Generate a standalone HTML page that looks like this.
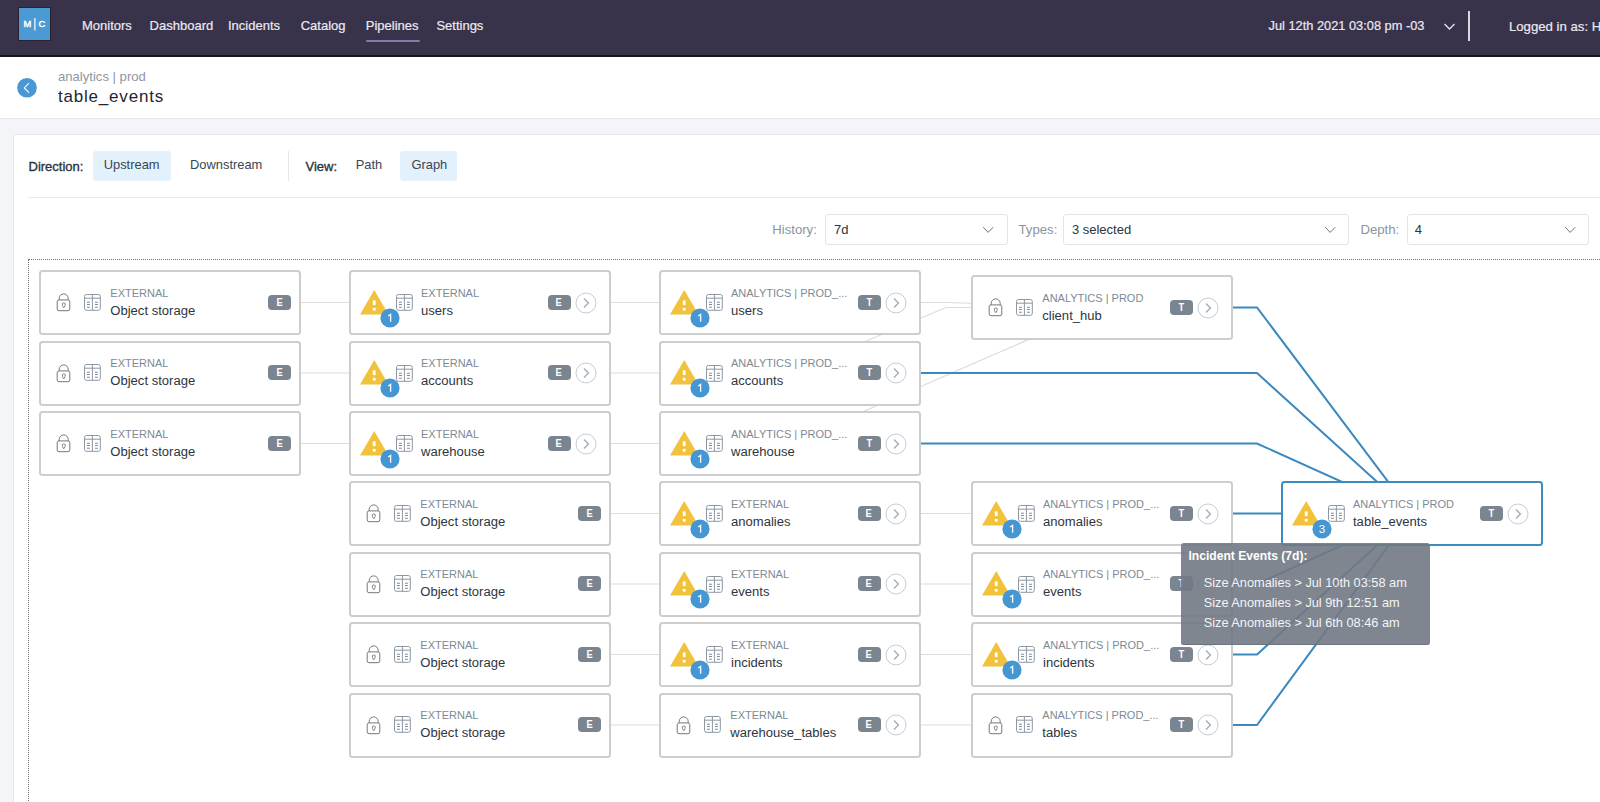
<!DOCTYPE html><html><head><meta charset="utf-8"><style>
*{margin:0;padding:0;box-sizing:border-box}
html,body{width:1600px;height:802px;overflow:hidden;background:#f4f5f9;font-family:"Liberation Sans", sans-serif}
.t{position:absolute;white-space:nowrap;z-index:3}
#hdr{position:absolute;left:0;top:0;width:1600px;height:57px;background:#38324a;border-bottom:2px solid #17141e}
#logo{position:absolute;left:19px;top:8px;width:31px;height:32px;background:#4c9ad4;box-shadow:0 0 0 1px #2b2230;z-index:2}
#sub{position:absolute;left:0;top:57px;width:1600px;height:62px;background:#fff;border-bottom:1px solid #e7e9ee}
#card{position:absolute;left:12.5px;top:133.7px;width:1620px;height:700px;background:#fff;border:1px solid #e6e8ec;border-radius:3px}
.btn{position:absolute;background:#e2f1fc;border-radius:3px}
.sel{position:absolute;background:#fff;border:1px solid #e1e5ea;border-radius:3px}
#graph{position:absolute;left:28px;top:259px;width:1600px;height:600px;border-top:1px dotted #707070;border-left:1px dotted #707070}
#edges{position:absolute;left:0;top:0;z-index:1}
.node{position:absolute;background:#fff;border:2px solid #cdcdcd;border-radius:3.5px;z-index:2}
.sel-node{border-color:#3d8bc1}
.ic{position:absolute;z-index:3}
.tb{position:absolute;width:23px;height:15.2px;background:#7b8590;border-radius:4px;color:#fff;font-size:11px;font-weight:700;line-height:15.2px;text-align:center;z-index:3}
.tb span{display:inline-block;transform:scaleX(0.85)}
#tip{position:absolute;left:1181px;top:543px;width:249px;height:101.5px;background:rgba(113,121,132,0.9);border-radius:3px;box-shadow:inset 0 -1px 0 rgba(95,105,115,0.6);z-index:5}
</style></head><body>
<div id="hdr"></div>
<div id="logo"><svg width="31" height="32" viewBox="0 0 31 32"><text x="4.6" y="18.8" font-family="Liberation Sans" font-weight="400" font-size="9.4" fill="#fff" stroke="#fff" stroke-width="0.45">M</text><rect x="15.3" y="10" width="1.2" height="12.5" fill="#fff"/><text x="19.6" y="18.9" font-family="Liberation Sans" font-weight="400" font-size="9.4" fill="#fff" stroke="#fff" stroke-width="0.45">C</text></svg></div>
<div class="t" style="left:82px;top:19.00px;font-size:13px;line-height:13px;color:#ebe9f0;font-weight:400;-webkit-text-stroke:0.2px #ebe9f0">Monitors</div>
<div class="t" style="left:149.6px;top:19.00px;font-size:13px;line-height:13px;color:#ebe9f0;font-weight:400;-webkit-text-stroke:0.2px #ebe9f0">Dashboard</div>
<div class="t" style="left:228px;top:19.00px;font-size:13px;line-height:13px;color:#ebe9f0;font-weight:400;-webkit-text-stroke:0.2px #ebe9f0">Incidents</div>
<div class="t" style="left:300.7px;top:19.00px;font-size:13px;line-height:13px;color:#ebe9f0;font-weight:400;-webkit-text-stroke:0.2px #ebe9f0">Catalog</div>
<div class="t" style="left:365.8px;top:19.00px;font-size:13px;line-height:13px;color:#ebe9f0;font-weight:400;-webkit-text-stroke:0.2px #ebe9f0">Pipelines</div>
<div class="t" style="left:436.4px;top:19.00px;font-size:13px;line-height:13px;color:#ebe9f0;font-weight:400;-webkit-text-stroke:0.2px #ebe9f0">Settings</div>
<div style="position:absolute;left:365.5px;top:40px;width:54px;height:2px;background:#8479b0;border-radius:1px"></div>
<div class="t" style="left:1268.6px;top:20.46px;font-size:12.8px;line-height:12.8px;color:#ebe9f0;font-weight:400;-webkit-text-stroke:0.2px #ebe9f0">Jul 12th 2021 03:08 pm -03</div>
<svg style="position:absolute;left:1443px;top:22px" width="13" height="9"><path d="M1.5 2 L6.5 7 L11.5 2" stroke="#e6e4ec" stroke-width="1.3" fill="none"/></svg>
<div style="position:absolute;left:1468px;top:11px;width:2px;height:30px;background:#d9d7df"></div>
<div class="t" style="left:1508.9px;top:20.13px;font-size:13.2px;line-height:13.2px;color:#ebe9f0;font-weight:400;-webkit-text-stroke:0.2px #ebe9f0">Logged in as: Hector</div>
<div id="sub"></div>
<svg style="position:absolute;left:17px;top:78px" width="20" height="20"><circle cx="10" cy="9.8" r="9.8" fill="#4a98d3"/><path d="M12 5.2 L7.3 9.9 L12 14.6" stroke="#fff" stroke-width="1.1" fill="none"/></svg>
<div class="t" style="left:58px;top:70.16px;font-size:13.1px;line-height:13.1px;color:#8e97a1;font-weight:400;">analytics | prod</div>
<div class="t" style="left:58px;top:87.61px;font-size:17px;line-height:17px;color:#1e2631;font-weight:400;letter-spacing:0.8px;">table_events</div>
<div id="card"></div>
<div class="t" style="left:28.5px;top:159.80px;font-size:13px;line-height:13px;color:#2b3440;font-weight:400;-webkit-text-stroke:0.35px #2b3440">Direction:</div>
<div class="btn" style="left:93px;top:150.5px;width:77.5px;height:30.2px"></div>
<div class="t" style="left:103.7px;top:158.78px;font-size:12.9px;line-height:12.9px;color:#3a4552;font-weight:400;">Upstream</div>
<div class="t" style="left:190px;top:158.78px;font-size:12.9px;line-height:12.9px;color:#3a4552;font-weight:400;">Downstream</div>
<div style="position:absolute;left:288px;top:151px;width:1px;height:30px;background:#e4e7eb"></div>
<div class="t" style="left:305.5px;top:159.80px;font-size:13px;line-height:13px;color:#2b3440;font-weight:400;-webkit-text-stroke:0.35px #2b3440">View:</div>
<div class="t" style="left:355.7px;top:158.78px;font-size:12.9px;line-height:12.9px;color:#3a4552;font-weight:400;">Path</div>
<div class="btn" style="left:400px;top:150.5px;width:56.8px;height:30.2px"></div>
<div class="t" style="left:411.4px;top:158.78px;font-size:12.9px;line-height:12.9px;color:#3a4552;font-weight:400;">Graph</div>
<div style="position:absolute;left:28px;top:197px;width:1580px;height:1px;background:#e9ebee"></div>
<div class="t" style="left:772.2px;top:222.63px;font-size:13.2px;line-height:13.2px;color:#8a949e;font-weight:400;">History:</div>
<div class="sel" style="left:825px;top:213.5px;width:182.5px;height:31px"></div>
<div class="t" style="left:834px;top:222.80px;font-size:13px;line-height:13px;color:#2b3440;font-weight:400;">7d</div>
<svg style="position:absolute;left:981.5px;top:225px" width="13" height="10"><path d="M1.2 2.2 L6.2 7.4 L11.2 2.2" stroke="#6a747e" stroke-width="1" fill="none"/></svg>
<div class="t" style="left:1018.5px;top:222.63px;font-size:13.2px;line-height:13.2px;color:#8a949e;font-weight:400;">Types:</div>
<div class="sel" style="left:1063px;top:213.5px;width:286.29999999999995px;height:31px"></div>
<div class="t" style="left:1071.9px;top:222.80px;font-size:13px;line-height:13px;color:#2b3440;font-weight:400;">3 selected</div>
<svg style="position:absolute;left:1324.3px;top:225px" width="13" height="10"><path d="M1.2 2.2 L6.2 7.4 L11.2 2.2" stroke="#6a747e" stroke-width="1" fill="none"/></svg>
<div class="t" style="left:1360.4px;top:222.63px;font-size:13.2px;line-height:13.2px;color:#8a949e;font-weight:400;">Depth:</div>
<div class="sel" style="left:1406.5px;top:213.5px;width:182.29999999999995px;height:31px"></div>
<div class="t" style="left:1414.8px;top:222.80px;font-size:13px;line-height:13px;color:#2b3440;font-weight:400;">4</div>
<svg style="position:absolute;left:1563.5px;top:225px" width="13" height="10"><path d="M1.2 2.2 L6.2 7.4 L11.2 2.2" stroke="#6a747e" stroke-width="1" fill="none"/></svg>
<div id="graph"></div>
<svg id="edges" width="1600" height="802"><polyline points="301.0,302.5 349.0,302.5" fill="none" stroke="#dcdcdc" stroke-width="1.2"/><polyline points="301.0,373.0 349.0,373.0" fill="none" stroke="#dcdcdc" stroke-width="1.2"/><polyline points="301.0,443.5 349.0,443.5" fill="none" stroke="#dcdcdc" stroke-width="1.2"/><polyline points="611.0,302.5 659.0,302.5" fill="none" stroke="#dcdcdc" stroke-width="1.2"/><polyline points="611.0,373.0 659.0,373.0" fill="none" stroke="#dcdcdc" stroke-width="1.2"/><polyline points="611.0,443.5 659.0,443.5" fill="none" stroke="#dcdcdc" stroke-width="1.2"/><polyline points="611.0,513.5 659.0,513.5" fill="none" stroke="#dcdcdc" stroke-width="1.2"/><polyline points="611.0,584.0 659.0,584.0" fill="none" stroke="#dcdcdc" stroke-width="1.2"/><polyline points="611.0,654.5 659.0,654.5" fill="none" stroke="#dcdcdc" stroke-width="1.2"/><polyline points="611.0,725.0 659.0,725.0" fill="none" stroke="#dcdcdc" stroke-width="1.2"/><polyline points="921.0,513.5 971.0,513.5" fill="none" stroke="#dcdcdc" stroke-width="1.2"/><polyline points="921.0,584.0 971.0,584.0" fill="none" stroke="#dcdcdc" stroke-width="1.2"/><polyline points="921.0,654.5 971.0,654.5" fill="none" stroke="#dcdcdc" stroke-width="1.2"/><polyline points="921.0,725.0 971.0,725.0" fill="none" stroke="#dcdcdc" stroke-width="1.2"/><polyline points="790.0,302.5 947.0,302.5 1102.0,307.5" fill="none" stroke="#dcdcdc" stroke-width="1.2"/><polyline points="790.0,373.0 946.0,307.5 1102.0,307.5" fill="none" stroke="#dcdcdc" stroke-width="1.2"/><polyline points="790.0,443.5 1102.0,307.5" fill="none" stroke="#dcdcdc" stroke-width="1.2"/><polyline points="1233.0,307.5 1257.0,307.5 1412.0,513.5" fill="none" stroke="#3b89bf" stroke-width="2"/><polyline points="921.0,373.0 1257.0,373.0 1412.0,513.5" fill="none" stroke="#3b89bf" stroke-width="2"/><polyline points="921.0,443.5 1257.0,443.5 1412.0,513.5" fill="none" stroke="#3b89bf" stroke-width="2"/><polyline points="1233.0,513.5 1257.0,513.5 1412.0,513.5" fill="none" stroke="#3b89bf" stroke-width="2"/><polyline points="1233.0,584.0 1257.0,584.0 1412.0,513.5" fill="none" stroke="#3b89bf" stroke-width="2"/><polyline points="1233.0,654.5 1257.0,654.5 1412.0,513.5" fill="none" stroke="#3b89bf" stroke-width="2"/><polyline points="1233.0,725.0 1257.0,725.0 1412.0,513.5" fill="none" stroke="#3b89bf" stroke-width="2"/></svg>
<div class="node" style="left:39px;top:270px;width:262px;height:65px"></div>
<svg class="ic" style="left:56px;top:293.2px" width="15" height="19" viewBox="0 0 15 19"><path d="M3.2 7 V5.4 A4.5 4.5 0 0 1 12.2 5.4 V7" fill="none" stroke="#76787c" stroke-width="1"/><rect x="1.2" y="6.9" width="12.6" height="10.8" rx="1.8" fill="#fff" stroke="#76787c" stroke-width="1"/><path d="M6.3 10.6 Q7.8 9.2 9.3 10.6 Q9.3 12.6 8.2 14.4 H7.3 Q6.3 12.6 6.3 10.6 Z" fill="none" stroke="#76787c" stroke-width="0.9"/></svg>
<svg class="ic" style="left:84.1px;top:293.8px" width="17" height="17" viewBox="0 0 17 17"><rect x="0.5" y="0.5" width="15.8" height="15.8" rx="2" fill="none" stroke="#8c97a3" stroke-width="1"/><path d="M0.5 4.2 H16.3 M8.4 0.5 V16.3" stroke="#8c97a3" stroke-width="1"/><path d="M3 8.2 H5.9 M3 10.5 H5.9 M3 13.3 H5.9 M11 8.2 H13.9 M11 10.5 H13.9 M11 13.3 H13.9" stroke="#7f8a96" stroke-width="1.1"/></svg>
<div class="t" style="left:110.3px;top:287.99px;font-size:11px;line-height:11px;color:#7d8995;font-weight:400;">EXTERNAL</div>
<div class="t" style="left:110.3px;top:303.75px;font-size:13.05px;line-height:13.05px;color:#2d3540;font-weight:400;">Object storage</div>
<div class="tb" style="left:268px;top:294.8px"><span>E</span></div>
<div class="node" style="left:39px;top:340.5px;width:262px;height:65px"></div>
<svg class="ic" style="left:56px;top:363.7px" width="15" height="19" viewBox="0 0 15 19"><path d="M3.2 7 V5.4 A4.5 4.5 0 0 1 12.2 5.4 V7" fill="none" stroke="#76787c" stroke-width="1"/><rect x="1.2" y="6.9" width="12.6" height="10.8" rx="1.8" fill="#fff" stroke="#76787c" stroke-width="1"/><path d="M6.3 10.6 Q7.8 9.2 9.3 10.6 Q9.3 12.6 8.2 14.4 H7.3 Q6.3 12.6 6.3 10.6 Z" fill="none" stroke="#76787c" stroke-width="0.9"/></svg>
<svg class="ic" style="left:84.1px;top:364.3px" width="17" height="17" viewBox="0 0 17 17"><rect x="0.5" y="0.5" width="15.8" height="15.8" rx="2" fill="none" stroke="#8c97a3" stroke-width="1"/><path d="M0.5 4.2 H16.3 M8.4 0.5 V16.3" stroke="#8c97a3" stroke-width="1"/><path d="M3 8.2 H5.9 M3 10.5 H5.9 M3 13.3 H5.9 M11 8.2 H13.9 M11 10.5 H13.9 M11 13.3 H13.9" stroke="#7f8a96" stroke-width="1.1"/></svg>
<div class="t" style="left:110.3px;top:358.49px;font-size:11px;line-height:11px;color:#7d8995;font-weight:400;">EXTERNAL</div>
<div class="t" style="left:110.3px;top:374.25px;font-size:13.05px;line-height:13.05px;color:#2d3540;font-weight:400;">Object storage</div>
<div class="tb" style="left:268px;top:365.3px"><span>E</span></div>
<div class="node" style="left:39px;top:411px;width:262px;height:65px"></div>
<svg class="ic" style="left:56px;top:434.2px" width="15" height="19" viewBox="0 0 15 19"><path d="M3.2 7 V5.4 A4.5 4.5 0 0 1 12.2 5.4 V7" fill="none" stroke="#76787c" stroke-width="1"/><rect x="1.2" y="6.9" width="12.6" height="10.8" rx="1.8" fill="#fff" stroke="#76787c" stroke-width="1"/><path d="M6.3 10.6 Q7.8 9.2 9.3 10.6 Q9.3 12.6 8.2 14.4 H7.3 Q6.3 12.6 6.3 10.6 Z" fill="none" stroke="#76787c" stroke-width="0.9"/></svg>
<svg class="ic" style="left:84.1px;top:434.8px" width="17" height="17" viewBox="0 0 17 17"><rect x="0.5" y="0.5" width="15.8" height="15.8" rx="2" fill="none" stroke="#8c97a3" stroke-width="1"/><path d="M0.5 4.2 H16.3 M8.4 0.5 V16.3" stroke="#8c97a3" stroke-width="1"/><path d="M3 8.2 H5.9 M3 10.5 H5.9 M3 13.3 H5.9 M11 8.2 H13.9 M11 10.5 H13.9 M11 13.3 H13.9" stroke="#7f8a96" stroke-width="1.1"/></svg>
<div class="t" style="left:110.3px;top:428.99px;font-size:11px;line-height:11px;color:#7d8995;font-weight:400;">EXTERNAL</div>
<div class="t" style="left:110.3px;top:444.75px;font-size:13.05px;line-height:13.05px;color:#2d3540;font-weight:400;">Object storage</div>
<div class="tb" style="left:268px;top:435.8px"><span>E</span></div>
<div class="node" style="left:349px;top:270px;width:262px;height:65px"></div>
<svg class="ic" style="left:359.7px;top:289.5px" width="29" height="25" viewBox="0 0 29 25"><path d="M14.25 0 L28.5 24.4 H0 Z" fill="#f2c23d"/><rect x="12.8" y="10.4" width="2.8" height="4.7" fill="#fff"/><rect x="12.8" y="17.9" width="2.8" height="2.7" fill="#fff"/></svg>
<svg class="ic" style="left:395.7px;top:294px" width="17" height="17" viewBox="0 0 17 17"><rect x="0.5" y="0.5" width="15.8" height="15.8" rx="2" fill="none" stroke="#8c97a3" stroke-width="1"/><path d="M0.5 4.2 H16.3 M8.4 0.5 V16.3" stroke="#8c97a3" stroke-width="1"/><path d="M3 8.2 H5.9 M3 10.5 H5.9 M3 13.3 H5.9 M11 8.2 H13.9 M11 10.5 H13.9 M11 13.3 H13.9" stroke="#7f8a96" stroke-width="1.1"/></svg>
<svg class="ic" style="left:379.8px;top:307.8px" width="20" height="20" viewBox="0 0 20 20"><circle cx="10" cy="10" r="9.6" fill="#4597d3"/><path d="M8.2 8 L10.6 6.5 V13.8" fill="none" stroke="#fff" stroke-width="1.3"/></svg>
<div class="t" style="left:421px;top:287.99px;font-size:11px;line-height:11px;color:#7d8995;font-weight:400;">EXTERNAL</div>
<div class="t" style="left:421px;top:303.75px;font-size:13.05px;line-height:13.05px;color:#2d3540;font-weight:400;">users</div>
<div class="tb" style="left:547.6px;top:294.8px"><span>E</span></div>
<svg class="ic" style="left:574.6px;top:291.5px" width="22" height="22" viewBox="0 0 22 22"><circle cx="11" cy="11" r="10" fill="#fff" stroke="#c5cdd5" stroke-width="1"/><path d="M9 6.5 L13.4 11 L9 15.5" fill="none" stroke="#a6b1bb" stroke-width="1.5"/></svg>
<div class="node" style="left:349px;top:340.5px;width:262px;height:65px"></div>
<svg class="ic" style="left:359.7px;top:360.0px" width="29" height="25" viewBox="0 0 29 25"><path d="M14.25 0 L28.5 24.4 H0 Z" fill="#f2c23d"/><rect x="12.8" y="10.4" width="2.8" height="4.7" fill="#fff"/><rect x="12.8" y="17.9" width="2.8" height="2.7" fill="#fff"/></svg>
<svg class="ic" style="left:395.7px;top:364.5px" width="17" height="17" viewBox="0 0 17 17"><rect x="0.5" y="0.5" width="15.8" height="15.8" rx="2" fill="none" stroke="#8c97a3" stroke-width="1"/><path d="M0.5 4.2 H16.3 M8.4 0.5 V16.3" stroke="#8c97a3" stroke-width="1"/><path d="M3 8.2 H5.9 M3 10.5 H5.9 M3 13.3 H5.9 M11 8.2 H13.9 M11 10.5 H13.9 M11 13.3 H13.9" stroke="#7f8a96" stroke-width="1.1"/></svg>
<svg class="ic" style="left:379.8px;top:378.3px" width="20" height="20" viewBox="0 0 20 20"><circle cx="10" cy="10" r="9.6" fill="#4597d3"/><path d="M8.2 8 L10.6 6.5 V13.8" fill="none" stroke="#fff" stroke-width="1.3"/></svg>
<div class="t" style="left:421px;top:358.49px;font-size:11px;line-height:11px;color:#7d8995;font-weight:400;">EXTERNAL</div>
<div class="t" style="left:421px;top:374.25px;font-size:13.05px;line-height:13.05px;color:#2d3540;font-weight:400;">accounts</div>
<div class="tb" style="left:547.6px;top:365.3px"><span>E</span></div>
<svg class="ic" style="left:574.6px;top:362.0px" width="22" height="22" viewBox="0 0 22 22"><circle cx="11" cy="11" r="10" fill="#fff" stroke="#c5cdd5" stroke-width="1"/><path d="M9 6.5 L13.4 11 L9 15.5" fill="none" stroke="#a6b1bb" stroke-width="1.5"/></svg>
<div class="node" style="left:349px;top:411px;width:262px;height:65px"></div>
<svg class="ic" style="left:359.7px;top:430.5px" width="29" height="25" viewBox="0 0 29 25"><path d="M14.25 0 L28.5 24.4 H0 Z" fill="#f2c23d"/><rect x="12.8" y="10.4" width="2.8" height="4.7" fill="#fff"/><rect x="12.8" y="17.9" width="2.8" height="2.7" fill="#fff"/></svg>
<svg class="ic" style="left:395.7px;top:435px" width="17" height="17" viewBox="0 0 17 17"><rect x="0.5" y="0.5" width="15.8" height="15.8" rx="2" fill="none" stroke="#8c97a3" stroke-width="1"/><path d="M0.5 4.2 H16.3 M8.4 0.5 V16.3" stroke="#8c97a3" stroke-width="1"/><path d="M3 8.2 H5.9 M3 10.5 H5.9 M3 13.3 H5.9 M11 8.2 H13.9 M11 10.5 H13.9 M11 13.3 H13.9" stroke="#7f8a96" stroke-width="1.1"/></svg>
<svg class="ic" style="left:379.8px;top:448.8px" width="20" height="20" viewBox="0 0 20 20"><circle cx="10" cy="10" r="9.6" fill="#4597d3"/><path d="M8.2 8 L10.6 6.5 V13.8" fill="none" stroke="#fff" stroke-width="1.3"/></svg>
<div class="t" style="left:421px;top:428.99px;font-size:11px;line-height:11px;color:#7d8995;font-weight:400;">EXTERNAL</div>
<div class="t" style="left:421px;top:444.75px;font-size:13.05px;line-height:13.05px;color:#2d3540;font-weight:400;">warehouse</div>
<div class="tb" style="left:547.6px;top:435.8px"><span>E</span></div>
<svg class="ic" style="left:574.6px;top:432.5px" width="22" height="22" viewBox="0 0 22 22"><circle cx="11" cy="11" r="10" fill="#fff" stroke="#c5cdd5" stroke-width="1"/><path d="M9 6.5 L13.4 11 L9 15.5" fill="none" stroke="#a6b1bb" stroke-width="1.5"/></svg>
<div class="node" style="left:349px;top:481px;width:262px;height:65px"></div>
<svg class="ic" style="left:366px;top:504.2px" width="15" height="19" viewBox="0 0 15 19"><path d="M3.2 7 V5.4 A4.5 4.5 0 0 1 12.2 5.4 V7" fill="none" stroke="#76787c" stroke-width="1"/><rect x="1.2" y="6.9" width="12.6" height="10.8" rx="1.8" fill="#fff" stroke="#76787c" stroke-width="1"/><path d="M6.3 10.6 Q7.8 9.2 9.3 10.6 Q9.3 12.6 8.2 14.4 H7.3 Q6.3 12.6 6.3 10.6 Z" fill="none" stroke="#76787c" stroke-width="0.9"/></svg>
<svg class="ic" style="left:394.1px;top:504.8px" width="17" height="17" viewBox="0 0 17 17"><rect x="0.5" y="0.5" width="15.8" height="15.8" rx="2" fill="none" stroke="#8c97a3" stroke-width="1"/><path d="M0.5 4.2 H16.3 M8.4 0.5 V16.3" stroke="#8c97a3" stroke-width="1"/><path d="M3 8.2 H5.9 M3 10.5 H5.9 M3 13.3 H5.9 M11 8.2 H13.9 M11 10.5 H13.9 M11 13.3 H13.9" stroke="#7f8a96" stroke-width="1.1"/></svg>
<div class="t" style="left:420.3px;top:498.99px;font-size:11px;line-height:11px;color:#7d8995;font-weight:400;">EXTERNAL</div>
<div class="t" style="left:420.3px;top:514.75px;font-size:13.05px;line-height:13.05px;color:#2d3540;font-weight:400;">Object storage</div>
<div class="tb" style="left:578px;top:505.8px"><span>E</span></div>
<div class="node" style="left:349px;top:551.5px;width:262px;height:65px"></div>
<svg class="ic" style="left:366px;top:574.7px" width="15" height="19" viewBox="0 0 15 19"><path d="M3.2 7 V5.4 A4.5 4.5 0 0 1 12.2 5.4 V7" fill="none" stroke="#76787c" stroke-width="1"/><rect x="1.2" y="6.9" width="12.6" height="10.8" rx="1.8" fill="#fff" stroke="#76787c" stroke-width="1"/><path d="M6.3 10.6 Q7.8 9.2 9.3 10.6 Q9.3 12.6 8.2 14.4 H7.3 Q6.3 12.6 6.3 10.6 Z" fill="none" stroke="#76787c" stroke-width="0.9"/></svg>
<svg class="ic" style="left:394.1px;top:575.3px" width="17" height="17" viewBox="0 0 17 17"><rect x="0.5" y="0.5" width="15.8" height="15.8" rx="2" fill="none" stroke="#8c97a3" stroke-width="1"/><path d="M0.5 4.2 H16.3 M8.4 0.5 V16.3" stroke="#8c97a3" stroke-width="1"/><path d="M3 8.2 H5.9 M3 10.5 H5.9 M3 13.3 H5.9 M11 8.2 H13.9 M11 10.5 H13.9 M11 13.3 H13.9" stroke="#7f8a96" stroke-width="1.1"/></svg>
<div class="t" style="left:420.3px;top:569.49px;font-size:11px;line-height:11px;color:#7d8995;font-weight:400;">EXTERNAL</div>
<div class="t" style="left:420.3px;top:585.25px;font-size:13.05px;line-height:13.05px;color:#2d3540;font-weight:400;">Object storage</div>
<div class="tb" style="left:578px;top:576.3px"><span>E</span></div>
<div class="node" style="left:349px;top:622px;width:262px;height:65px"></div>
<svg class="ic" style="left:366px;top:645.2px" width="15" height="19" viewBox="0 0 15 19"><path d="M3.2 7 V5.4 A4.5 4.5 0 0 1 12.2 5.4 V7" fill="none" stroke="#76787c" stroke-width="1"/><rect x="1.2" y="6.9" width="12.6" height="10.8" rx="1.8" fill="#fff" stroke="#76787c" stroke-width="1"/><path d="M6.3 10.6 Q7.8 9.2 9.3 10.6 Q9.3 12.6 8.2 14.4 H7.3 Q6.3 12.6 6.3 10.6 Z" fill="none" stroke="#76787c" stroke-width="0.9"/></svg>
<svg class="ic" style="left:394.1px;top:645.8px" width="17" height="17" viewBox="0 0 17 17"><rect x="0.5" y="0.5" width="15.8" height="15.8" rx="2" fill="none" stroke="#8c97a3" stroke-width="1"/><path d="M0.5 4.2 H16.3 M8.4 0.5 V16.3" stroke="#8c97a3" stroke-width="1"/><path d="M3 8.2 H5.9 M3 10.5 H5.9 M3 13.3 H5.9 M11 8.2 H13.9 M11 10.5 H13.9 M11 13.3 H13.9" stroke="#7f8a96" stroke-width="1.1"/></svg>
<div class="t" style="left:420.3px;top:639.99px;font-size:11px;line-height:11px;color:#7d8995;font-weight:400;">EXTERNAL</div>
<div class="t" style="left:420.3px;top:655.75px;font-size:13.05px;line-height:13.05px;color:#2d3540;font-weight:400;">Object storage</div>
<div class="tb" style="left:578px;top:646.8px"><span>E</span></div>
<div class="node" style="left:349px;top:692.5px;width:262px;height:65px"></div>
<svg class="ic" style="left:366px;top:715.7px" width="15" height="19" viewBox="0 0 15 19"><path d="M3.2 7 V5.4 A4.5 4.5 0 0 1 12.2 5.4 V7" fill="none" stroke="#76787c" stroke-width="1"/><rect x="1.2" y="6.9" width="12.6" height="10.8" rx="1.8" fill="#fff" stroke="#76787c" stroke-width="1"/><path d="M6.3 10.6 Q7.8 9.2 9.3 10.6 Q9.3 12.6 8.2 14.4 H7.3 Q6.3 12.6 6.3 10.6 Z" fill="none" stroke="#76787c" stroke-width="0.9"/></svg>
<svg class="ic" style="left:394.1px;top:716.3px" width="17" height="17" viewBox="0 0 17 17"><rect x="0.5" y="0.5" width="15.8" height="15.8" rx="2" fill="none" stroke="#8c97a3" stroke-width="1"/><path d="M0.5 4.2 H16.3 M8.4 0.5 V16.3" stroke="#8c97a3" stroke-width="1"/><path d="M3 8.2 H5.9 M3 10.5 H5.9 M3 13.3 H5.9 M11 8.2 H13.9 M11 10.5 H13.9 M11 13.3 H13.9" stroke="#7f8a96" stroke-width="1.1"/></svg>
<div class="t" style="left:420.3px;top:710.49px;font-size:11px;line-height:11px;color:#7d8995;font-weight:400;">EXTERNAL</div>
<div class="t" style="left:420.3px;top:726.25px;font-size:13.05px;line-height:13.05px;color:#2d3540;font-weight:400;">Object storage</div>
<div class="tb" style="left:578px;top:717.3px"><span>E</span></div>
<div class="node" style="left:659px;top:270px;width:262px;height:65px"></div>
<svg class="ic" style="left:669.7px;top:289.5px" width="29" height="25" viewBox="0 0 29 25"><path d="M14.25 0 L28.5 24.4 H0 Z" fill="#f2c23d"/><rect x="12.8" y="10.4" width="2.8" height="4.7" fill="#fff"/><rect x="12.8" y="17.9" width="2.8" height="2.7" fill="#fff"/></svg>
<svg class="ic" style="left:705.7px;top:294px" width="17" height="17" viewBox="0 0 17 17"><rect x="0.5" y="0.5" width="15.8" height="15.8" rx="2" fill="none" stroke="#8c97a3" stroke-width="1"/><path d="M0.5 4.2 H16.3 M8.4 0.5 V16.3" stroke="#8c97a3" stroke-width="1"/><path d="M3 8.2 H5.9 M3 10.5 H5.9 M3 13.3 H5.9 M11 8.2 H13.9 M11 10.5 H13.9 M11 13.3 H13.9" stroke="#7f8a96" stroke-width="1.1"/></svg>
<svg class="ic" style="left:689.8px;top:307.8px" width="20" height="20" viewBox="0 0 20 20"><circle cx="10" cy="10" r="9.6" fill="#4597d3"/><path d="M8.2 8 L10.6 6.5 V13.8" fill="none" stroke="#fff" stroke-width="1.3"/></svg>
<div class="t" style="left:731px;top:287.99px;font-size:11px;line-height:11px;color:#7d8995;font-weight:400;">ANALYTICS | PROD_...</div>
<div class="t" style="left:731px;top:303.75px;font-size:13.05px;line-height:13.05px;color:#2d3540;font-weight:400;">users</div>
<div class="tb" style="left:857.6px;top:294.8px"><span>T</span></div>
<svg class="ic" style="left:884.6px;top:291.5px" width="22" height="22" viewBox="0 0 22 22"><circle cx="11" cy="11" r="10" fill="#fff" stroke="#c5cdd5" stroke-width="1"/><path d="M9 6.5 L13.4 11 L9 15.5" fill="none" stroke="#a6b1bb" stroke-width="1.5"/></svg>
<div class="node" style="left:659px;top:340.5px;width:262px;height:65px"></div>
<svg class="ic" style="left:669.7px;top:360.0px" width="29" height="25" viewBox="0 0 29 25"><path d="M14.25 0 L28.5 24.4 H0 Z" fill="#f2c23d"/><rect x="12.8" y="10.4" width="2.8" height="4.7" fill="#fff"/><rect x="12.8" y="17.9" width="2.8" height="2.7" fill="#fff"/></svg>
<svg class="ic" style="left:705.7px;top:364.5px" width="17" height="17" viewBox="0 0 17 17"><rect x="0.5" y="0.5" width="15.8" height="15.8" rx="2" fill="none" stroke="#8c97a3" stroke-width="1"/><path d="M0.5 4.2 H16.3 M8.4 0.5 V16.3" stroke="#8c97a3" stroke-width="1"/><path d="M3 8.2 H5.9 M3 10.5 H5.9 M3 13.3 H5.9 M11 8.2 H13.9 M11 10.5 H13.9 M11 13.3 H13.9" stroke="#7f8a96" stroke-width="1.1"/></svg>
<svg class="ic" style="left:689.8px;top:378.3px" width="20" height="20" viewBox="0 0 20 20"><circle cx="10" cy="10" r="9.6" fill="#4597d3"/><path d="M8.2 8 L10.6 6.5 V13.8" fill="none" stroke="#fff" stroke-width="1.3"/></svg>
<div class="t" style="left:731px;top:358.49px;font-size:11px;line-height:11px;color:#7d8995;font-weight:400;">ANALYTICS | PROD_...</div>
<div class="t" style="left:731px;top:374.25px;font-size:13.05px;line-height:13.05px;color:#2d3540;font-weight:400;">accounts</div>
<div class="tb" style="left:857.6px;top:365.3px"><span>T</span></div>
<svg class="ic" style="left:884.6px;top:362.0px" width="22" height="22" viewBox="0 0 22 22"><circle cx="11" cy="11" r="10" fill="#fff" stroke="#c5cdd5" stroke-width="1"/><path d="M9 6.5 L13.4 11 L9 15.5" fill="none" stroke="#a6b1bb" stroke-width="1.5"/></svg>
<div class="node" style="left:659px;top:411px;width:262px;height:65px"></div>
<svg class="ic" style="left:669.7px;top:430.5px" width="29" height="25" viewBox="0 0 29 25"><path d="M14.25 0 L28.5 24.4 H0 Z" fill="#f2c23d"/><rect x="12.8" y="10.4" width="2.8" height="4.7" fill="#fff"/><rect x="12.8" y="17.9" width="2.8" height="2.7" fill="#fff"/></svg>
<svg class="ic" style="left:705.7px;top:435px" width="17" height="17" viewBox="0 0 17 17"><rect x="0.5" y="0.5" width="15.8" height="15.8" rx="2" fill="none" stroke="#8c97a3" stroke-width="1"/><path d="M0.5 4.2 H16.3 M8.4 0.5 V16.3" stroke="#8c97a3" stroke-width="1"/><path d="M3 8.2 H5.9 M3 10.5 H5.9 M3 13.3 H5.9 M11 8.2 H13.9 M11 10.5 H13.9 M11 13.3 H13.9" stroke="#7f8a96" stroke-width="1.1"/></svg>
<svg class="ic" style="left:689.8px;top:448.8px" width="20" height="20" viewBox="0 0 20 20"><circle cx="10" cy="10" r="9.6" fill="#4597d3"/><path d="M8.2 8 L10.6 6.5 V13.8" fill="none" stroke="#fff" stroke-width="1.3"/></svg>
<div class="t" style="left:731px;top:428.99px;font-size:11px;line-height:11px;color:#7d8995;font-weight:400;">ANALYTICS | PROD_...</div>
<div class="t" style="left:731px;top:444.75px;font-size:13.05px;line-height:13.05px;color:#2d3540;font-weight:400;">warehouse</div>
<div class="tb" style="left:857.6px;top:435.8px"><span>T</span></div>
<svg class="ic" style="left:884.6px;top:432.5px" width="22" height="22" viewBox="0 0 22 22"><circle cx="11" cy="11" r="10" fill="#fff" stroke="#c5cdd5" stroke-width="1"/><path d="M9 6.5 L13.4 11 L9 15.5" fill="none" stroke="#a6b1bb" stroke-width="1.5"/></svg>
<div class="node" style="left:659px;top:481px;width:262px;height:65px"></div>
<svg class="ic" style="left:669.7px;top:500.5px" width="29" height="25" viewBox="0 0 29 25"><path d="M14.25 0 L28.5 24.4 H0 Z" fill="#f2c23d"/><rect x="12.8" y="10.4" width="2.8" height="4.7" fill="#fff"/><rect x="12.8" y="17.9" width="2.8" height="2.7" fill="#fff"/></svg>
<svg class="ic" style="left:705.7px;top:505px" width="17" height="17" viewBox="0 0 17 17"><rect x="0.5" y="0.5" width="15.8" height="15.8" rx="2" fill="none" stroke="#8c97a3" stroke-width="1"/><path d="M0.5 4.2 H16.3 M8.4 0.5 V16.3" stroke="#8c97a3" stroke-width="1"/><path d="M3 8.2 H5.9 M3 10.5 H5.9 M3 13.3 H5.9 M11 8.2 H13.9 M11 10.5 H13.9 M11 13.3 H13.9" stroke="#7f8a96" stroke-width="1.1"/></svg>
<svg class="ic" style="left:689.8px;top:518.8px" width="20" height="20" viewBox="0 0 20 20"><circle cx="10" cy="10" r="9.6" fill="#4597d3"/><path d="M8.2 8 L10.6 6.5 V13.8" fill="none" stroke="#fff" stroke-width="1.3"/></svg>
<div class="t" style="left:731px;top:498.99px;font-size:11px;line-height:11px;color:#7d8995;font-weight:400;">EXTERNAL</div>
<div class="t" style="left:731px;top:514.75px;font-size:13.05px;line-height:13.05px;color:#2d3540;font-weight:400;">anomalies</div>
<div class="tb" style="left:857.6px;top:505.8px"><span>E</span></div>
<svg class="ic" style="left:884.6px;top:502.5px" width="22" height="22" viewBox="0 0 22 22"><circle cx="11" cy="11" r="10" fill="#fff" stroke="#c5cdd5" stroke-width="1"/><path d="M9 6.5 L13.4 11 L9 15.5" fill="none" stroke="#a6b1bb" stroke-width="1.5"/></svg>
<div class="node" style="left:659px;top:551.5px;width:262px;height:65px"></div>
<svg class="ic" style="left:669.7px;top:571.0px" width="29" height="25" viewBox="0 0 29 25"><path d="M14.25 0 L28.5 24.4 H0 Z" fill="#f2c23d"/><rect x="12.8" y="10.4" width="2.8" height="4.7" fill="#fff"/><rect x="12.8" y="17.9" width="2.8" height="2.7" fill="#fff"/></svg>
<svg class="ic" style="left:705.7px;top:575.5px" width="17" height="17" viewBox="0 0 17 17"><rect x="0.5" y="0.5" width="15.8" height="15.8" rx="2" fill="none" stroke="#8c97a3" stroke-width="1"/><path d="M0.5 4.2 H16.3 M8.4 0.5 V16.3" stroke="#8c97a3" stroke-width="1"/><path d="M3 8.2 H5.9 M3 10.5 H5.9 M3 13.3 H5.9 M11 8.2 H13.9 M11 10.5 H13.9 M11 13.3 H13.9" stroke="#7f8a96" stroke-width="1.1"/></svg>
<svg class="ic" style="left:689.8px;top:589.3px" width="20" height="20" viewBox="0 0 20 20"><circle cx="10" cy="10" r="9.6" fill="#4597d3"/><path d="M8.2 8 L10.6 6.5 V13.8" fill="none" stroke="#fff" stroke-width="1.3"/></svg>
<div class="t" style="left:731px;top:569.49px;font-size:11px;line-height:11px;color:#7d8995;font-weight:400;">EXTERNAL</div>
<div class="t" style="left:731px;top:585.25px;font-size:13.05px;line-height:13.05px;color:#2d3540;font-weight:400;">events</div>
<div class="tb" style="left:857.6px;top:576.3px"><span>E</span></div>
<svg class="ic" style="left:884.6px;top:573.0px" width="22" height="22" viewBox="0 0 22 22"><circle cx="11" cy="11" r="10" fill="#fff" stroke="#c5cdd5" stroke-width="1"/><path d="M9 6.5 L13.4 11 L9 15.5" fill="none" stroke="#a6b1bb" stroke-width="1.5"/></svg>
<div class="node" style="left:659px;top:622px;width:262px;height:65px"></div>
<svg class="ic" style="left:669.7px;top:641.5px" width="29" height="25" viewBox="0 0 29 25"><path d="M14.25 0 L28.5 24.4 H0 Z" fill="#f2c23d"/><rect x="12.8" y="10.4" width="2.8" height="4.7" fill="#fff"/><rect x="12.8" y="17.9" width="2.8" height="2.7" fill="#fff"/></svg>
<svg class="ic" style="left:705.7px;top:646px" width="17" height="17" viewBox="0 0 17 17"><rect x="0.5" y="0.5" width="15.8" height="15.8" rx="2" fill="none" stroke="#8c97a3" stroke-width="1"/><path d="M0.5 4.2 H16.3 M8.4 0.5 V16.3" stroke="#8c97a3" stroke-width="1"/><path d="M3 8.2 H5.9 M3 10.5 H5.9 M3 13.3 H5.9 M11 8.2 H13.9 M11 10.5 H13.9 M11 13.3 H13.9" stroke="#7f8a96" stroke-width="1.1"/></svg>
<svg class="ic" style="left:689.8px;top:659.8px" width="20" height="20" viewBox="0 0 20 20"><circle cx="10" cy="10" r="9.6" fill="#4597d3"/><path d="M8.2 8 L10.6 6.5 V13.8" fill="none" stroke="#fff" stroke-width="1.3"/></svg>
<div class="t" style="left:731px;top:639.99px;font-size:11px;line-height:11px;color:#7d8995;font-weight:400;">EXTERNAL</div>
<div class="t" style="left:731px;top:655.75px;font-size:13.05px;line-height:13.05px;color:#2d3540;font-weight:400;">incidents</div>
<div class="tb" style="left:857.6px;top:646.8px"><span>E</span></div>
<svg class="ic" style="left:884.6px;top:643.5px" width="22" height="22" viewBox="0 0 22 22"><circle cx="11" cy="11" r="10" fill="#fff" stroke="#c5cdd5" stroke-width="1"/><path d="M9 6.5 L13.4 11 L9 15.5" fill="none" stroke="#a6b1bb" stroke-width="1.5"/></svg>
<div class="node" style="left:659px;top:692.5px;width:262px;height:65px"></div>
<svg class="ic" style="left:676px;top:715.7px" width="15" height="19" viewBox="0 0 15 19"><path d="M3.2 7 V5.4 A4.5 4.5 0 0 1 12.2 5.4 V7" fill="none" stroke="#76787c" stroke-width="1"/><rect x="1.2" y="6.9" width="12.6" height="10.8" rx="1.8" fill="#fff" stroke="#76787c" stroke-width="1"/><path d="M6.3 10.6 Q7.8 9.2 9.3 10.6 Q9.3 12.6 8.2 14.4 H7.3 Q6.3 12.6 6.3 10.6 Z" fill="none" stroke="#76787c" stroke-width="0.9"/></svg>
<svg class="ic" style="left:704.1px;top:716.3px" width="17" height="17" viewBox="0 0 17 17"><rect x="0.5" y="0.5" width="15.8" height="15.8" rx="2" fill="none" stroke="#8c97a3" stroke-width="1"/><path d="M0.5 4.2 H16.3 M8.4 0.5 V16.3" stroke="#8c97a3" stroke-width="1"/><path d="M3 8.2 H5.9 M3 10.5 H5.9 M3 13.3 H5.9 M11 8.2 H13.9 M11 10.5 H13.9 M11 13.3 H13.9" stroke="#7f8a96" stroke-width="1.1"/></svg>
<div class="t" style="left:730.3px;top:710.49px;font-size:11px;line-height:11px;color:#7d8995;font-weight:400;">EXTERNAL</div>
<div class="t" style="left:730.3px;top:726.25px;font-size:13.05px;line-height:13.05px;color:#2d3540;font-weight:400;">warehouse_tables</div>
<div class="tb" style="left:857.6px;top:717.3px"><span>E</span></div>
<svg class="ic" style="left:884.6px;top:714.0px" width="22" height="22" viewBox="0 0 22 22"><circle cx="11" cy="11" r="10" fill="#fff" stroke="#c5cdd5" stroke-width="1"/><path d="M9 6.5 L13.4 11 L9 15.5" fill="none" stroke="#a6b1bb" stroke-width="1.5"/></svg>
<div class="node" style="left:971px;top:275px;width:262px;height:65px"></div>
<svg class="ic" style="left:988px;top:298.2px" width="15" height="19" viewBox="0 0 15 19"><path d="M3.2 7 V5.4 A4.5 4.5 0 0 1 12.2 5.4 V7" fill="none" stroke="#76787c" stroke-width="1"/><rect x="1.2" y="6.9" width="12.6" height="10.8" rx="1.8" fill="#fff" stroke="#76787c" stroke-width="1"/><path d="M6.3 10.6 Q7.8 9.2 9.3 10.6 Q9.3 12.6 8.2 14.4 H7.3 Q6.3 12.6 6.3 10.6 Z" fill="none" stroke="#76787c" stroke-width="0.9"/></svg>
<svg class="ic" style="left:1016.1px;top:298.8px" width="17" height="17" viewBox="0 0 17 17"><rect x="0.5" y="0.5" width="15.8" height="15.8" rx="2" fill="none" stroke="#8c97a3" stroke-width="1"/><path d="M0.5 4.2 H16.3 M8.4 0.5 V16.3" stroke="#8c97a3" stroke-width="1"/><path d="M3 8.2 H5.9 M3 10.5 H5.9 M3 13.3 H5.9 M11 8.2 H13.9 M11 10.5 H13.9 M11 13.3 H13.9" stroke="#7f8a96" stroke-width="1.1"/></svg>
<div class="t" style="left:1042.3px;top:292.99px;font-size:11px;line-height:11px;color:#7d8995;font-weight:400;">ANALYTICS | PROD</div>
<div class="t" style="left:1042.3px;top:308.75px;font-size:13.05px;line-height:13.05px;color:#2d3540;font-weight:400;">client_hub</div>
<div class="tb" style="left:1169.6px;top:299.8px"><span>T</span></div>
<svg class="ic" style="left:1196.6px;top:296.5px" width="22" height="22" viewBox="0 0 22 22"><circle cx="11" cy="11" r="10" fill="#fff" stroke="#c5cdd5" stroke-width="1"/><path d="M9 6.5 L13.4 11 L9 15.5" fill="none" stroke="#a6b1bb" stroke-width="1.5"/></svg>
<div class="node" style="left:971px;top:481px;width:262px;height:65px"></div>
<svg class="ic" style="left:981.7px;top:500.5px" width="29" height="25" viewBox="0 0 29 25"><path d="M14.25 0 L28.5 24.4 H0 Z" fill="#f2c23d"/><rect x="12.8" y="10.4" width="2.8" height="4.7" fill="#fff"/><rect x="12.8" y="17.9" width="2.8" height="2.7" fill="#fff"/></svg>
<svg class="ic" style="left:1017.7px;top:505px" width="17" height="17" viewBox="0 0 17 17"><rect x="0.5" y="0.5" width="15.8" height="15.8" rx="2" fill="none" stroke="#8c97a3" stroke-width="1"/><path d="M0.5 4.2 H16.3 M8.4 0.5 V16.3" stroke="#8c97a3" stroke-width="1"/><path d="M3 8.2 H5.9 M3 10.5 H5.9 M3 13.3 H5.9 M11 8.2 H13.9 M11 10.5 H13.9 M11 13.3 H13.9" stroke="#7f8a96" stroke-width="1.1"/></svg>
<svg class="ic" style="left:1001.8px;top:518.8px" width="20" height="20" viewBox="0 0 20 20"><circle cx="10" cy="10" r="9.6" fill="#4597d3"/><path d="M8.2 8 L10.6 6.5 V13.8" fill="none" stroke="#fff" stroke-width="1.3"/></svg>
<div class="t" style="left:1043px;top:498.99px;font-size:11px;line-height:11px;color:#7d8995;font-weight:400;">ANALYTICS | PROD_...</div>
<div class="t" style="left:1043px;top:514.75px;font-size:13.05px;line-height:13.05px;color:#2d3540;font-weight:400;">anomalies</div>
<div class="tb" style="left:1169.6px;top:505.8px"><span>T</span></div>
<svg class="ic" style="left:1196.6px;top:502.5px" width="22" height="22" viewBox="0 0 22 22"><circle cx="11" cy="11" r="10" fill="#fff" stroke="#c5cdd5" stroke-width="1"/><path d="M9 6.5 L13.4 11 L9 15.5" fill="none" stroke="#a6b1bb" stroke-width="1.5"/></svg>
<div class="node" style="left:971px;top:551.5px;width:262px;height:65px"></div>
<svg class="ic" style="left:981.7px;top:571.0px" width="29" height="25" viewBox="0 0 29 25"><path d="M14.25 0 L28.5 24.4 H0 Z" fill="#f2c23d"/><rect x="12.8" y="10.4" width="2.8" height="4.7" fill="#fff"/><rect x="12.8" y="17.9" width="2.8" height="2.7" fill="#fff"/></svg>
<svg class="ic" style="left:1017.7px;top:575.5px" width="17" height="17" viewBox="0 0 17 17"><rect x="0.5" y="0.5" width="15.8" height="15.8" rx="2" fill="none" stroke="#8c97a3" stroke-width="1"/><path d="M0.5 4.2 H16.3 M8.4 0.5 V16.3" stroke="#8c97a3" stroke-width="1"/><path d="M3 8.2 H5.9 M3 10.5 H5.9 M3 13.3 H5.9 M11 8.2 H13.9 M11 10.5 H13.9 M11 13.3 H13.9" stroke="#7f8a96" stroke-width="1.1"/></svg>
<svg class="ic" style="left:1001.8px;top:589.3px" width="20" height="20" viewBox="0 0 20 20"><circle cx="10" cy="10" r="9.6" fill="#4597d3"/><path d="M8.2 8 L10.6 6.5 V13.8" fill="none" stroke="#fff" stroke-width="1.3"/></svg>
<div class="t" style="left:1043px;top:569.49px;font-size:11px;line-height:11px;color:#7d8995;font-weight:400;">ANALYTICS | PROD_...</div>
<div class="t" style="left:1043px;top:585.25px;font-size:13.05px;line-height:13.05px;color:#2d3540;font-weight:400;">events</div>
<div class="tb" style="left:1169.6px;top:576.3px"><span>T</span></div>
<svg class="ic" style="left:1196.6px;top:573.0px" width="22" height="22" viewBox="0 0 22 22"><circle cx="11" cy="11" r="10" fill="#fff" stroke="#c5cdd5" stroke-width="1"/><path d="M9 6.5 L13.4 11 L9 15.5" fill="none" stroke="#a6b1bb" stroke-width="1.5"/></svg>
<div class="node" style="left:971px;top:622px;width:262px;height:65px"></div>
<svg class="ic" style="left:981.7px;top:641.5px" width="29" height="25" viewBox="0 0 29 25"><path d="M14.25 0 L28.5 24.4 H0 Z" fill="#f2c23d"/><rect x="12.8" y="10.4" width="2.8" height="4.7" fill="#fff"/><rect x="12.8" y="17.9" width="2.8" height="2.7" fill="#fff"/></svg>
<svg class="ic" style="left:1017.7px;top:646px" width="17" height="17" viewBox="0 0 17 17"><rect x="0.5" y="0.5" width="15.8" height="15.8" rx="2" fill="none" stroke="#8c97a3" stroke-width="1"/><path d="M0.5 4.2 H16.3 M8.4 0.5 V16.3" stroke="#8c97a3" stroke-width="1"/><path d="M3 8.2 H5.9 M3 10.5 H5.9 M3 13.3 H5.9 M11 8.2 H13.9 M11 10.5 H13.9 M11 13.3 H13.9" stroke="#7f8a96" stroke-width="1.1"/></svg>
<svg class="ic" style="left:1001.8px;top:659.8px" width="20" height="20" viewBox="0 0 20 20"><circle cx="10" cy="10" r="9.6" fill="#4597d3"/><path d="M8.2 8 L10.6 6.5 V13.8" fill="none" stroke="#fff" stroke-width="1.3"/></svg>
<div class="t" style="left:1043px;top:639.99px;font-size:11px;line-height:11px;color:#7d8995;font-weight:400;">ANALYTICS | PROD_...</div>
<div class="t" style="left:1043px;top:655.75px;font-size:13.05px;line-height:13.05px;color:#2d3540;font-weight:400;">incidents</div>
<div class="tb" style="left:1169.6px;top:646.8px"><span>T</span></div>
<svg class="ic" style="left:1196.6px;top:643.5px" width="22" height="22" viewBox="0 0 22 22"><circle cx="11" cy="11" r="10" fill="#fff" stroke="#c5cdd5" stroke-width="1"/><path d="M9 6.5 L13.4 11 L9 15.5" fill="none" stroke="#a6b1bb" stroke-width="1.5"/></svg>
<div class="node" style="left:971px;top:692.5px;width:262px;height:65px"></div>
<svg class="ic" style="left:988px;top:715.7px" width="15" height="19" viewBox="0 0 15 19"><path d="M3.2 7 V5.4 A4.5 4.5 0 0 1 12.2 5.4 V7" fill="none" stroke="#76787c" stroke-width="1"/><rect x="1.2" y="6.9" width="12.6" height="10.8" rx="1.8" fill="#fff" stroke="#76787c" stroke-width="1"/><path d="M6.3 10.6 Q7.8 9.2 9.3 10.6 Q9.3 12.6 8.2 14.4 H7.3 Q6.3 12.6 6.3 10.6 Z" fill="none" stroke="#76787c" stroke-width="0.9"/></svg>
<svg class="ic" style="left:1016.1px;top:716.3px" width="17" height="17" viewBox="0 0 17 17"><rect x="0.5" y="0.5" width="15.8" height="15.8" rx="2" fill="none" stroke="#8c97a3" stroke-width="1"/><path d="M0.5 4.2 H16.3 M8.4 0.5 V16.3" stroke="#8c97a3" stroke-width="1"/><path d="M3 8.2 H5.9 M3 10.5 H5.9 M3 13.3 H5.9 M11 8.2 H13.9 M11 10.5 H13.9 M11 13.3 H13.9" stroke="#7f8a96" stroke-width="1.1"/></svg>
<div class="t" style="left:1042.3px;top:710.49px;font-size:11px;line-height:11px;color:#7d8995;font-weight:400;">ANALYTICS | PROD_...</div>
<div class="t" style="left:1042.3px;top:726.25px;font-size:13.05px;line-height:13.05px;color:#2d3540;font-weight:400;">tables</div>
<div class="tb" style="left:1169.6px;top:717.3px"><span>T</span></div>
<svg class="ic" style="left:1196.6px;top:714.0px" width="22" height="22" viewBox="0 0 22 22"><circle cx="11" cy="11" r="10" fill="#fff" stroke="#c5cdd5" stroke-width="1"/><path d="M9 6.5 L13.4 11 L9 15.5" fill="none" stroke="#a6b1bb" stroke-width="1.5"/></svg>
<div class="node sel-node" style="left:1281px;top:481px;width:262px;height:65px"></div>
<svg class="ic" style="left:1291.7px;top:500.5px" width="29" height="25" viewBox="0 0 29 25"><path d="M14.25 0 L28.5 24.4 H0 Z" fill="#f2c23d"/><rect x="12.8" y="10.4" width="2.8" height="4.7" fill="#fff"/><rect x="12.8" y="17.9" width="2.8" height="2.7" fill="#fff"/></svg>
<svg class="ic" style="left:1327.7px;top:505px" width="17" height="17" viewBox="0 0 17 17"><rect x="0.5" y="0.5" width="15.8" height="15.8" rx="2" fill="none" stroke="#8c97a3" stroke-width="1"/><path d="M0.5 4.2 H16.3 M8.4 0.5 V16.3" stroke="#8c97a3" stroke-width="1"/><path d="M3 8.2 H5.9 M3 10.5 H5.9 M3 13.3 H5.9 M11 8.2 H13.9 M11 10.5 H13.9 M11 13.3 H13.9" stroke="#7f8a96" stroke-width="1.1"/></svg>
<svg class="ic" style="left:1311.8px;top:518.8px" width="20" height="20" viewBox="0 0 20 20"><circle cx="10" cy="10" r="9.6" fill="#4597d3"/><text x="10" y="14" text-anchor="middle" font-family="Liberation Sans" font-size="11.5" fill="#fff">3</text></svg>
<div class="t" style="left:1353px;top:498.99px;font-size:11px;line-height:11px;color:#7d8995;font-weight:400;">ANALYTICS | PROD</div>
<div class="t" style="left:1353px;top:514.75px;font-size:13.05px;line-height:13.05px;color:#2d3540;font-weight:400;">table_events</div>
<div class="tb" style="left:1479.6px;top:505.8px"><span>T</span></div>
<svg class="ic" style="left:1506.6px;top:502.5px" width="22" height="22" viewBox="0 0 22 22"><circle cx="11" cy="11" r="10" fill="#fff" stroke="#c5cdd5" stroke-width="1"/><path d="M9 6.5 L13.4 11 L9 15.5" fill="none" stroke="#a6b1bb" stroke-width="1.5"/></svg>
<div id="tip"></div>
<div class="t" style="left:1188.5px;top:550.06px;font-size:12.1px;line-height:12.1px;color:#ffffff;font-weight:700;z-index:6">Incident Events (7d):</div>
<div class="t" style="left:1203.7px;top:576.51px;font-size:12.75px;line-height:12.75px;color:#f4f5f6;font-weight:400;z-index:6">Size Anomalies &gt; Jul 10th 03:58 am</div>
<div class="t" style="left:1203.7px;top:596.61px;font-size:12.75px;line-height:12.75px;color:#f4f5f6;font-weight:400;z-index:6">Size Anomalies &gt; Jul 9th 12:51 am</div>
<div class="t" style="left:1203.7px;top:616.71px;font-size:12.75px;line-height:12.75px;color:#f4f5f6;font-weight:400;z-index:6">Size Anomalies &gt; Jul 6th 08:46 am</div>
</body></html>
